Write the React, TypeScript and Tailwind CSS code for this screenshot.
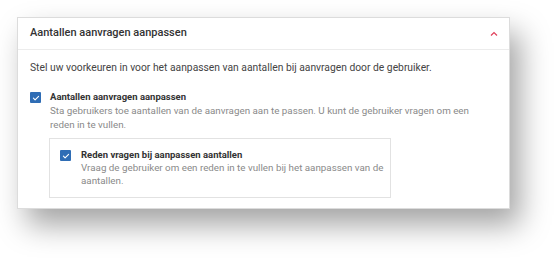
import React from "react";

function Check() {
  return (
    <div className="w-[11px] h-[11px] bg-[#2f6db5] rounded-[1px] flex items-center justify-center shrink-0">
      <svg width="8" height="8" viewBox="0 0 8 8" fill="none">
        <path d="M1.4 4.2 L3.1 5.8 L6.6 2.3" stroke="white" strokeWidth="1.1" strokeLinecap="round" strokeLinejoin="round" />
      </svg>
    </div>
  );
}

export default function App() {
  return (
    <div className="w-[558px] h-[258px] bg-white pt-[17px] pl-[17px]" style={{ fontFamily: "Roboto, 'Noto Sans', sans-serif" }}>
      <div className="w-[493px] border border-[#dcdcdc] bg-white shadow-[10px_16px_28px_rgba(0,0,0,0.36)]">
        <div className="h-[32px] flex items-center justify-between pl-[12px] pr-[11px] border-b border-[#ececec]">
          <span className="text-[11px] font-medium text-[#333]">Aantallen aanvragen aanpassen</span>
          <svg width="8" height="6" viewBox="0 0 8 6" fill="none">
            <path d="M1 4.5 L4 1.5 L7 4.5" stroke="#e0405a" strokeWidth="1.2" />
          </svg>
        </div>
        <div className="pl-[12px] pt-[11px] pb-[10px]">
          <p className="text-[10.3px] text-[#444] leading-[14px]">Stel uw voorkeuren in voor het aanpassen van aantallen bij aanvragen door de gebruiker.</p>
          <div className="flex gap-[9px] mt-[15px]">
            <div className="pt-[2px]"><Check /></div>
            <div>
              <div className="text-[9.5px] font-bold text-[#333] leading-[14px]">Aantallen aanvragen aanpassen</div>
              <div className="text-[9.8px] text-[#8a8a8a] leading-[14px] w-[425px]">Sta gebruikers toe aantallen van de aanvragen aan te passen. U kunt de gebruiker vragen om een reden in te vullen.</div>
            </div>
          </div>
          <div className="ml-[19px] mt-[6px] w-[342px] border border-[#e2e2e2] pl-[10px] pt-[9px] pb-[10px]">
            <div className="flex gap-[10px]">
              <div className="pt-[2px]"><Check /></div>
              <div>
                <div className="text-[9.5px] font-bold text-[#333] leading-[13px]">Reden vragen bij aanpassen aantallen</div>
                <div className="text-[9.8px] text-[#8a8a8a] leading-[13px] w-[305px]">Vraag de gebruiker om een reden in te vullen bij het aanpassen van de aantallen.</div>
              </div>
            </div>
          </div>
        </div>
      </div>
    </div>
  );
}
